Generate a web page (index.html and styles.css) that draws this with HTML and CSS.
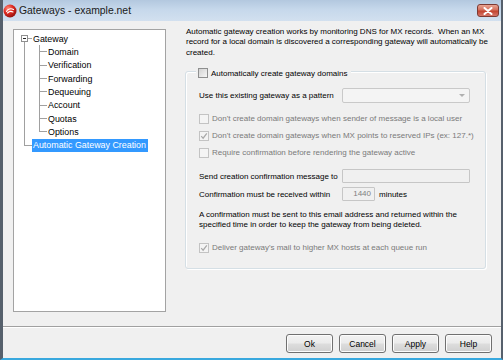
FILE: index.html
```html
<!DOCTYPE html>
<html>
<head>
<meta charset="utf-8">
<link rel="stylesheet" href="styles.css">
</head>
<body>
<div class="window">
  <div class="titlebar">
    <svg class="appicon" width="14" height="14" viewBox="0 0 14 14">
      <defs>
        <radialGradient id="rg" cx="0.35" cy="0.3" r="0.75">
          <stop offset="0" stop-color="#ff8a7a"/>
          <stop offset="0.5" stop-color="#e02b22"/>
          <stop offset="1" stop-color="#8e0f0c"/>
        </radialGradient>
      </defs>
      <circle cx="7" cy="7" r="6.5" fill="url(#rg)"/>
      <path d="M3.5 7.5 C4.5 5 8 4 10.5 5.5 M4.5 9 C6 7.5 8.5 7.2 10 8" stroke="#fff" stroke-width="1.1" fill="none" stroke-linecap="round"/>
    </svg>
    <span class="title">Gateways - example.net</span>
    <span class="close">
      <svg width="10" height="8" viewBox="0 0 10 8"><path d="M1.5 1 L8.5 7 M8.5 1 L1.5 7" stroke="#fff" stroke-width="2" stroke-linecap="round"/></svg>
    </span>
  </div>
  <div class="client">
    <div class="main">
      <div class="tree">
        <div class="row"><span class="g g-root"><span class="exp"></span></span><span class="lbl">Gateway</span></div>
        <div class="row"><span class="g g-pipe"></span><span class="t t-tee"></span><span class="lbl">Domain</span></div>
        <div class="row"><span class="g g-pipe"></span><span class="t t-tee"></span><span class="lbl">Verification</span></div>
        <div class="row"><span class="g g-pipe"></span><span class="t t-tee"></span><span class="lbl">Forwarding</span></div>
        <div class="row"><span class="g g-pipe"></span><span class="t t-tee"></span><span class="lbl">Dequeuing</span></div>
        <div class="row"><span class="g g-pipe"></span><span class="t t-tee"></span><span class="lbl">Account</span></div>
        <div class="row"><span class="g g-pipe"></span><span class="t t-tee"></span><span class="lbl">Quotas</span></div>
        <div class="row"><span class="g g-pipe"></span><span class="t t-elbow"></span><span class="lbl">Options</span></div>
        <div class="row"><span class="g g-elbow"></span><span class="lbl sel">Automatic Gateway Creation</span></div>
      </div>
      <div class="panel">
        <p class="desc">Automatic gateway creation works by monitoring DNS for MX records.&nbsp; When an MX<br>record for a local domain is discovered a corresponding gateway will automatically be<br>created.</p>
        <div class="group">
          <div class="legend"><span class="cb"></span><span>Automatically create gateway domains</span></div>
          <div class="field f-pattern">
            <span class="flabel">Use this existing gateway as a pattern</span>
            <span class="combo"><span class="arrow"></span></span>
          </div>
          <div class="checks">
            <div class="check dis"><span class="cb"></span><span>Don't create domain gateways when sender of message is a local user</span></div>
            <div class="check dis"><span class="cb on"><svg width="8" height="8" viewBox="0 0 8 8"><path d="M1.2 4.2 L3.1 6.2 L6.8 1.3" stroke="#a8a8a8" stroke-width="1.2" fill="none"/></svg></span><span>Don't create domain gateways when MX points to reserved IPs (ex: 127.*)</span></div>
            <div class="check dis"><span class="cb"></span><span>Require confirmation before rendering the gateway active</span></div>
          </div>
          <div class="field f-send">
            <span class="flabel">Send creation confirmation message to</span>
            <span class="input wide"></span>
          </div>
          <div class="field f-within">
            <span class="flabel">Confirmation must be received within</span>
            <span class="input num">1440</span>
            <span class="unit">minutes</span>
          </div>
          <p class="note">A confirmation must be sent to this email address and returned within the<br>specified time in order to keep the gateway from being deleted.</p>
          <div class="check dis deliver"><span class="cb on"><svg width="8" height="8" viewBox="0 0 8 8"><path d="M1.2 4.2 L3.1 6.2 L6.8 1.3" stroke="#a8a8a8" stroke-width="1.2" fill="none"/></svg></span><span>Deliver gateway's mail to higher MX hosts at each queue run</span></div>
        </div>
      </div>
    </div>
    <div class="sep"></div>
    <div class="buttons">
      <button class="btn">Ok</button>
      <button class="btn">Cancel</button>
      <button class="btn">Apply</button>
      <button class="btn">Help</button>
    </div>
  </div>
</div>
</body>
</html>
```
FILE: styles.css
```css
html, body {
  margin: 0;
  padding: 0;
  background: #f0f0f0;
}
body {
  width: 503px;
  height: 360px;
  overflow: hidden;
  font-family: "Liberation Sans", Arial, sans-serif;
  font-size: 8px;
  color: #000;
}
.window {
  box-sizing: border-box;
  width: 503px;
  height: 360px;
  border-left: 3px solid #56606c;
  border-right: 2px solid #56606c;
  border-bottom: 2px solid #38a8de;
  display: flex;
  flex-direction: column;
}
.titlebar {
  height: 21px;
  flex: none;
  display: flex;
  align-items: center;
  background: linear-gradient(#b3c8df, #c6d8eb 45%, #d2e0ef);
}
.appicon {
  flex: none;
  margin-left: 0;
}
.title {
  margin-left: 2px;
  font-size: 10.4px;
  color: #1a1a1a;
}
.close {
  margin-left: auto;
  margin-right: 2px;
  width: 22px;
  height: 13px;
  box-sizing: border-box;
  border: 1px solid #7d3a33;
  border-radius: 3px;
  background: linear-gradient(#e8a493, #d4705d 45%, #c2432f 55%, #d5766a);
  display: flex;
  align-items: center;
  justify-content: center;
}
.client {
  flex: 1;
  background: #f0f0f0;
  display: flex;
  flex-direction: column;
}
.main {
  display: flex;
  align-items: flex-start;
  height: 305px;
  flex: none;
}
.tree {
  --tl: #a0a0a0;
  box-sizing: border-box;
  margin-left: 10px;
  margin-top: 8px;
  width: 153px;
  height: 283px;
  border: 1px solid #a3a3a3;
  background: #fff;
  padding-top: 2px;
  font-size: 8.9px;
}
.row {
  display: flex;
  align-items: center;
  height: 13.33px;
}
.g {
  flex: none;
  width: 18px;
  height: 100%;
  display: flex;
  align-items: center;
}
.t {
  flex: none;
  width: 15px;
  height: 100%;
}
.g-root {
  background:
    linear-gradient(var(--tl), var(--tl)) 10px 100% / 1px 50% no-repeat,
    linear-gradient(var(--tl), var(--tl)) 14px 50% / 4px 1px no-repeat;
}
.exp {
  box-sizing: border-box;
  width: 7px;
  height: 7px;
  margin-left: 7px;
  border: 1px solid #8f8f8f;
  background: linear-gradient(#222, #222) center / 3px 1px no-repeat, #fff;
}
.g-pipe {
  background: linear-gradient(var(--tl), var(--tl)) 10px 0 / 1px 100% no-repeat;
}
.g-elbow {
  background:
    linear-gradient(var(--tl), var(--tl)) 10px 0 / 1px 50% no-repeat,
    linear-gradient(var(--tl), var(--tl)) 10px 50% / 8px 1px no-repeat;
}
.t-tee {
  background:
    linear-gradient(var(--tl), var(--tl)) 7px 0 / 1px 100% no-repeat,
    linear-gradient(var(--tl), var(--tl)) 7px 50% / 8px 1px no-repeat;
}
.t-elbow {
  background:
    linear-gradient(var(--tl), var(--tl)) 7px 0 / 1px 50% no-repeat,
    linear-gradient(var(--tl), var(--tl)) 7px 50% / 8px 1px no-repeat;
}
.lbl {
  padding-left: 1px;
  white-space: nowrap;
}
.sel {
  background: #3399ff;
  color: #fff;
  height: 13px;
  line-height: 13px;
  padding: 0 2px 0 1px;
}
.panel {
  margin-left: 19px;
  width: 301px;
  flex: none;
}
.desc {
  margin: 6px 0 0 1px;
  line-height: 10.4px;
  white-space: nowrap;
}
.group {
  margin-top: 13px;
  border: 1px solid #d5dfe5;
  border-radius: 3px;
  box-shadow: inset 1px 1px 0 #fff, 1px 1px 0 #fff;
  padding: 0 12px 12px 13px;
}
.legend {
  margin-top: -5px;
  margin-left: -3px;
  height: 12px;
  padding: 0 3px 0 2px;
  background: #f0f0f0;
  display: inline-flex;
  align-items: center;
  gap: 3px;
  white-space: nowrap;
  vertical-align: top;
}
.cb {
  box-sizing: border-box;
  flex: none;
  width: 10px;
  height: 10px;
  border: 1px solid #8e8f8f;
  background: linear-gradient(135deg, #d2d2d2, #f6f6f6);
  display: flex;
  align-items: center;
  justify-content: center;
}
.field {
  display: flex;
  align-items: center;
  white-space: nowrap;
}
.flabel {
  width: 143px;
  flex: none;
}
.f-pattern {
  margin-top: 7px;
  height: 15px;
}
.combo {
  box-sizing: border-box;
  width: 128px;
  height: 15px;
  border: 1px solid #c9c9c9;
  border-radius: 2px;
  background: #f4f4f4;
  display: flex;
  align-items: center;
  justify-content: flex-end;
  padding-right: 4px;
}
.arrow {
  width: 0;
  height: 0;
  border-left: 3px solid transparent;
  border-right: 3px solid transparent;
  border-top: 3px solid #b0b0b0;
}
.checks {
  margin-top: 7px;
}
.check {
  height: 17px;
  display: flex;
  align-items: center;
  gap: 3px;
  white-space: nowrap;
}
.dis {
  color: #7a7a7a;
}
.dis .cb {
  border-color: #c3c3c3;
  background: #f4f4f4;
}
.f-send {
  margin-top: 8px;
  height: 14px;
}
.f-within {
  margin-top: 4px;
  height: 14px;
}
.input {
  box-sizing: border-box;
  height: 14px;
  border: 1px solid #c6c6c6;
  background: #f0f0f0;
  border-radius: 1px;
}
.wide {
  width: 128px;
}
.num {
  width: 33px;
  color: #808080;
  text-align: right;
  padding-right: 3px;
  line-height: 12px;
}
.unit {
  margin-left: 4px;
}
.note {
  margin: 9px 0 0 0;
  line-height: 10px;
  white-space: nowrap;
}
.deliver {
  margin-top: 9px;
}
.sep {
  margin-top: 0;
  height: 0;
  border-top: 1px solid #a0a0a0;
  border-bottom: 1px solid #fff;
}
.buttons {
  display: flex;
  justify-content: flex-end;
  gap: 6px;
  padding-right: 9px;
  margin-top: 6px;
}
.btn {
  box-sizing: border-box;
  width: 47px;
  height: 19px;
  margin: 0;
  padding: 0;
  border: 1px solid #707070;
  border-radius: 3px;
  background: linear-gradient(#f2f2f2, #ebebeb 48%, #dddddd 52%, #cfcfcf);
  box-shadow: inset 0 0 0 1px #fcfcfc;
  font-family: "Liberation Sans", Arial, sans-serif;
  font-size: 8.5px;
  color: #000;
}
```
